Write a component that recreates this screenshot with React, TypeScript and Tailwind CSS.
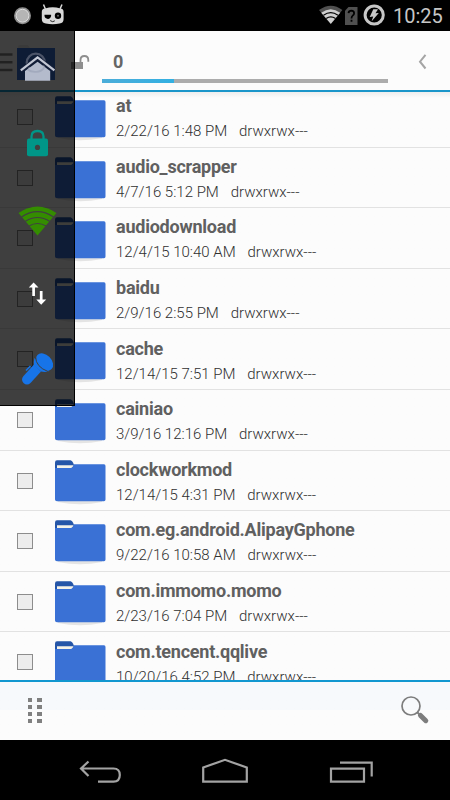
import React from "react";

type Entry = { name: string; date: string };

const entries: Entry[] = [
  { name: "at", date: "2/22/16 1:48 PM" },
  { name: "audio_scrapper", date: "4/7/16 5:12 PM" },
  { name: "audiodownload", date: "12/4/15 10:40 AM" },
  { name: "baidu", date: "2/9/16 2:55 PM" },
  { name: "cache", date: "12/14/15 7:51 PM" },
  { name: "cainiao", date: "3/9/16 12:16 PM" },
  { name: "clockworkmod", date: "12/14/15 4:31 PM" },
  { name: "com.eg.android.AlipayGphone", date: "9/22/16 10:58 AM" },
  { name: "com.immomo.momo", date: "2/23/16 7:04 PM" },
  { name: "com.tencent.qqlive", date: "10/20/16 4:52 PM" },
];

function StatusBar() {
  return (
    <div className="flex h-[31px] shrink-0 items-center bg-black">
      <svg className="ml-[13px]" width="56" height="31" viewBox="0 0 56 31">
        <circle cx="9.5" cy="15.7" r="8.5" fill="#8f8f8f" />
        <circle cx="9.5" cy="15.7" r="6.4" fill="#b5b5b5" stroke="#dedede" strokeWidth="1" />
        <path d="M30.5 4.5 32.4 9M49 4.5 47 9" stroke="#d8d8d8" strokeWidth="1.5" />
        <path d="M32 8.6Q34 8.2 36 7.6 39.7 6.8 43.4 7.6 45.5 8.2 47.5 8.6 50.6 9 50.6 12V19Q50.6 23 46.6 23.6Q39.7 25 32.8 23.6Q28.8 23 28.8 19V12Q28.8 9 32 8.6Z" fill="#d8d8d8" />
        <path d="M31.5 14.8h6.6v1.3q-.6 2.8-3.2 2.8-3-.2-3.4-2.8z" fill="#000" />
        <circle cx="45" cy="15.8" r="3.2" fill="#000" />
        <circle cx="45" cy="15.8" r="1" fill="#666" />
        <path d="M37.2 20.6l2.5 1.1 2.1-.9" stroke="#222" fill="none" />
      </svg>
      <svg className="ml-auto" width="69" height="31" viewBox="0 0 69 31">
        <path d="M2 10Q14 1.5 25.4 10L22.2 13.8Q14 8 5.2 13.8Z" fill="#505050" />
        <path d="M4.2 12.8Q13.8 5.6 23.2 12.8L13.8 24Z" fill="#d0d0d0" />
        <path d="M6.5 15.2Q13.8 10 21 15.2M9.2 18.5Q13.8 15.4 18.5 18.5" stroke="#000" strokeWidth="1.2" fill="none" />
        <path d="M31.5 7H40.5V25H28V10.8Z" fill="#505050" />
        <path d="M31.5 13.2q.3-2.5 2.9-2.5 2.7.2 2.7 2.5 0 1.4-1.4 2.4-1.2.9-1.2 2.8M34.5 19.8v2" stroke="#000" strokeWidth="1.8" fill="none" />
        <circle cx="57.2" cy="15" r="9.1" stroke="#c7c7c7" strokeWidth="3" fill="none" />
        <path d="M56.3 9.2H61L58.5 13.2 61.8 13 54.5 21.5 56.2 16.5 52.7 17Z" fill="#c7c7c7" />
      </svg>
      <span className="ml-[7px] w-[57px] whitespace-nowrap text-[20px] leading-none text-[#c6c6c6]">10:25</span>
    </div>
  );
}

function Header() {
  return (
    <header className="flex h-[61px] shrink-0 border-b-2 border-[#1b96ca] bg-[#fcfcfc]">
      <svg className="shrink-0" width="102" height="59" viewBox="0 0 102 59">
        <path d="M0 23.5H12.5M0 31.3H12.5M0 39H12.5" stroke="#858585" strokeWidth="2.6" />
        <path d="M18 15.5Q18 14 20 14H28L30 17H18Z" fill="#e6e6e6" />
        <rect x="17" y="17" width="38" height="32" fill="#3a70d2" />
        <path d="M71 31H83V38H71Z" fill="#8e8e8e" />
        <path d="M80.5 31V29.2Q80.5 25 84.4 25 88.3 25 88.3 29.2V30.7" fill="none" stroke="#8e8e8e" strokeWidth="1.8" />
      </svg>
      <div className="w-[286px] pt-[20px]">
        <div className="pl-[11px] text-[18px] font-bold leading-[22px] text-[#666]">0</div>
        <div className="mt-[6px] h-[4px] w-full bg-[#acacac]">
          <div className="h-full w-[72px] bg-linear-to-r from-[#4badd9] to-[#32b0e2]" />
        </div>
      </div>
      <svg width="62" height="59" viewBox="0 0 62 59">
        <path d="M37.5 23.8 32 30.7 37.5 37.5" stroke="#a5a5a5" strokeWidth="2" fill="none" />
      </svg>
    </header>
  );
}

function Folder() {
  return (
    <svg className="ml-[21px] mt-[7px] shrink-0" width="53" height="48" viewBox="0 0 53 48">
      <path d="M4 44Q26 48.5 48 44V42H4Z" fill="#e4e4e4" />
      <path d="M1 4.5Q1 2.3 3 2.3H16.5Q18.5 2.6 19.8 6.5V15H1Z" fill="#2556a8" />
      <path d="M3 7.2H19.5L18 9.9H3Z" fill="#f4f2e8" />
      <path d="M1 9.9H17Q19.5 9.4 20 6.2H50Q51.5 6.2 51.5 8V41.5Q51.5 43.3 50 43.3H3Q1 43.3 1 41.5Z" fill="#3a71d5" />
    </svg>
  );
}

function Row({ name, date }: Entry) {
  return (
    <li className="flex h-[60.6px] shrink-0 border-b border-[#e2e2e2]">
      <span className="ml-[17px] mt-[22px] h-[16px] w-[16px] shrink-0 border border-[#8d8d8d] bg-[#ededed]" />
      <Folder />
      <div className="ml-[9px] whitespace-nowrap pt-[8.2px]">
        <div className="text-[18px] font-bold leading-[22px] tracking-[-0.23px] text-[#606060]">{name}</div>
        <div className="mt-[4px] flex gap-[11.8px] text-[15px] font-light leading-[20px] text-[#303030]">
          <span>{date}</span>
          <span>drwxrwx---</span>
        </div>
      </div>
    </li>
  );
}

function Drawer() {
  return (
    <aside className="absolute left-0 top-[31px] h-[375px] w-[75px] border-b border-r border-black bg-black/75">
      <svg width="74" height="374" viewBox="0 31 74 374">
        <circle cx="35.8" cy="62.6" r="9" fill="none" stroke="#4c5468" strokeWidth="2.4" />
        <path d="M20.8 70.6 37.6 57.8 54.4 70.6" fill="none" stroke="#16203a" strokeWidth="4.2" />
        <path d="M25 71 37.6 61.8 50.2 71V80.8H25Z" fill="#b4bbcc" />
        <path d="M27.8 69.5Q30.5 72 35.8 71.8 41.5 72 44.6 67" fill="none" stroke="#a2aabd" strokeWidth="1.8" />
        <path d="M20.8 70.3 37.6 57.5 54.4 70.3" fill="none" stroke="#c3c8d4" strokeWidth="2.2" />
        <path d="M31.5 141V136.5Q31.5 131 37.5 131 43.5 131 43.5 136.5V141" fill="none" stroke="#009688" strokeWidth="2.3" />
        <rect x="27" y="138.6" width="21" height="17.6" rx="2" fill="#009688" />
        <circle cx="37.5" cy="147.4" r="2.6" fill="#404040" />
        <path d="M18.5 213Q37.5 200 56.5 213L37.5 235.5Z" fill="#348d00" />
        <path d="M21.5 217Q37.5 206.3 53.5 217M25 221.5Q37.5 213.5 50 221.5M29 226Q37.5 221 46 226" fill="none" stroke="#404040" strokeWidth="1.2" />
        <path d="M33.6 296V286M41.2 291V301" stroke="#fff" strokeWidth="2.7" />
        <path d="M28.8 287.5 33.6 282.5 38.5 287.5ZM36.3 299.5 41.2 304.8 46.2 299.5Z" fill="#fff" />
        <path d="M34 364.5 41 371.5 30.5 383Q27 386 23.5 383 20.5 379.5 23.5 376Z" fill="#1774e8" />
        <path d="M34.5 358Q33.5 361.5 34 365.5L41 371.5Q45.5 372.5 49 371Z" fill="#1774e8" />
        <ellipse cx="44.5" cy="362" rx="10" ry="7" transform="rotate(45 44.5 362)" fill="#1774e8" />
        <path d="M35.5 357Q36 367 48 371.5" fill="none" stroke="#404040" strokeWidth="1" />
        <path d="M26 370.5 30.5 366" stroke="#1774e8" strokeWidth="1.6" />
      </svg>
    </aside>
  );
}

function Toolbar() {
  return (
    <footer className="flex h-[60px] shrink-0 items-start justify-between border-t-2 border-[#1297d0] bg-linear-to-b from-[#f7f9fc] from-49% to-[#fcfcfc] to-49%">
      <div className="ml-[27.5px] mt-[15.5px] grid grid-cols-2 gap-x-[5.3px] gap-y-[3.2px]">
        {Array.from({ length: 8 }, (_, i) => (
          <span key={i} className="h-[4px] w-[4.7px] bg-[#808080]" />
        ))}
      </div>
      <svg className="mr-[20px] mt-[13px]" width="30" height="30" viewBox="0 0 30 30">
        <circle cx="11" cy="11" r="9" fill="none" stroke="#7d7d7d" strokeWidth="1.7" />
        <path d="M17.5 17.5 20 20" stroke="#7d7d7d" strokeWidth="2" />
        <path d="M20.5 20.5 25.8 25.7" stroke="#7d7d7d" strokeWidth="5" strokeLinecap="round" />
      </svg>
    </footer>
  );
}

function NavBar() {
  return (
    <nav className="h-[60px] shrink-0 bg-black">
      <svg width="450" height="60" viewBox="0 0 450 60" fill="none" stroke="#a3a3a3" strokeWidth="2.2">
        <path d="M98 41.6H113.5Q119.8 41.6 119.8 35 119.8 28.5 113.5 28.5H81M88.5 21.5 81 28.5 88.5 36" />
        <path d="M203.2 41.6V27.5L225 19.8 246.8 27.5V41.6Z" />
        <path d="M331 28.6H364V41.7H331ZM340 22.6H371.7V36.5" />
      </svg>
    </nav>
  );
}

export default function App() {
  return (
    <div className="relative flex h-[800px] w-[450px] flex-col overflow-hidden bg-[#fcfcfc] font-[Roboto,sans-serif]">
      <StatusBar />
      <Header />
      <ul className="flex h-[588px] shrink-0 flex-col overflow-hidden bg-linear-to-b from-[#eeeeee] to-[#fcfcfc] to-[6px]">
        <li className="-mt-[5px] shrink-0" />
        {entries.map((e) => (
          <Row key={e.name} {...e} />
        ))}
      </ul>
      <Toolbar />
      <NavBar />
      <Drawer />
    </div>
  );
}
